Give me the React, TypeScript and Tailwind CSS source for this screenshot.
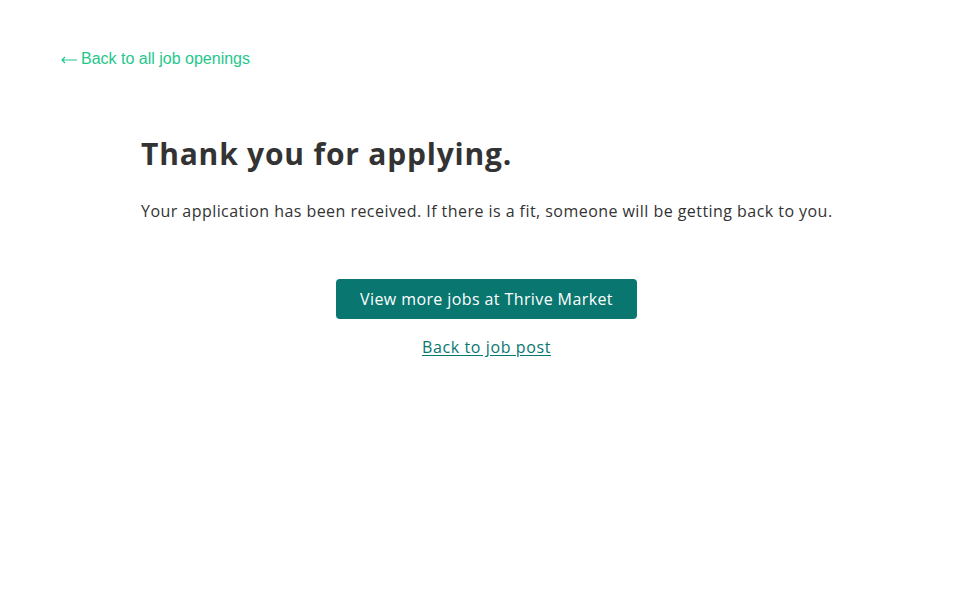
export default function App() {
    return (
        <div className="min-h-[589px] w-full bg-white">
            <div className="pl-[61px] pt-[46px]">
                <a href="#"
                   className="inline-flex items-center text-[16px] leading-[20px] text-[#1fc78b] font-['Liberation_Sans',Arial,sans-serif]">
                    <svg width="16" height="8" viewBox="0 0 16 8" className="mr-[4px] mt-[3px]" fill="none"
                         stroke="currentColor" strokeWidth="1.2">
                        <path d="M16 4H1M4 1L1 4L4 7"/>
                    </svg>
                    Back to all job openings
                </a>
            </div>
            <div className="mx-auto w-[691px] pt-[64px] font-['Open_Sans',sans-serif] text-[#333333]">
                <h1 className="text-[30px] leading-[40px] font-bold tracking-[0.8px]">Thank you for applying.</h1>
                <p className="mt-[25px] text-[16px] leading-[24px] tracking-[0.45px] whitespace-nowrap">
                    Your application has been received. If there is a fit, someone will be getting back to you.
                </p>
                <div className="mt-[56px] flex flex-col items-center">
                    <button
                        className="h-[40px] w-[301px] rounded-[4px] bg-[#097670] text-[16px] tracking-[0.4px] text-white">
                        View more jobs at Thrive Market
                    </button>
                    <a href="#"
                       className="mt-[17px] text-[16px] leading-[22px] tracking-[0.6px] text-[#097670] underline underline-offset-2">
                        Back to job post
                    </a>
                </div>
            </div>
        </div>
    )
}
